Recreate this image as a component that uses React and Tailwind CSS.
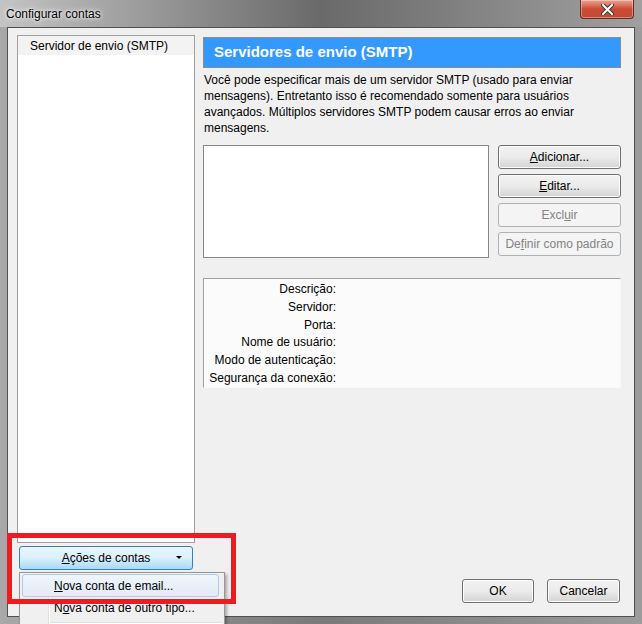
import React from "react";

const font = { fontFamily: '"Liberation Sans", Arial, sans-serif' };

function WinButton({ children, disabled, className = "" }) {
  return (
    <div
      className={`flex items-center justify-center rounded-[3px] border text-[12px] ${
        disabled
          ? "border-[#adb2b5] bg-[#f4f4f4] text-[#838383]"
          : "border-[#707070] bg-gradient-to-b from-[#f2f2f2] via-[#ebebeb] to-[#d4d4d4] text-black shadow-[inset_0_0_0_1px_#fcfcfc]"
      } ${className}`}
    >
      {children}
    </div>
  );
}

export default function App() {
  const fields = [
    "Descrição:",
    "Servidor:",
    "Porta:",
    "Nome de usuário:",
    "Modo de autenticação:",
    "Segurança da conexão:",
  ];

  return (
    <div
      style={font}
      className="relative w-[642px] h-[624px] overflow-hidden bg-gradient-to-r from-[#a8a8a8] via-[#7a7a7a] to-[#9c9c9c]"
    >
      {/* title bar */}
      <div className="relative h-[27px] flex items-center pl-[6px] bg-gradient-to-r from-[#c4c4c4] via-[#6a6a6a] to-[#a0a0a0]">
        <span className="text-[12px] text-black [text-shadow:0_0_6px_#ffffff,0_0_3px_#ffffff]">
          Configurar contas
        </span>
        <div className="absolute right-[8px] top-0 w-[54px] h-[19px] rounded-b-[4px] border border-t-0 border-[#6b2a22] bg-gradient-to-b from-[#e8a494] via-[#cc4a33] to-[#c24a36] flex items-center justify-center shadow-[inset_0_0_0_1px_rgba(255,255,255,0.35)]">
          <svg width="13" height="11" viewBox="0 0 13 11">
            <path
              d="M2 1 L11 10 M11 1 L2 10"
              stroke="#3a3a3a"
              strokeWidth="4"
              strokeLinecap="round"
            />
            <path
              d="M2 1 L11 10 M11 1 L2 10"
              stroke="#ffffff"
              strokeWidth="2"
              strokeLinecap="round"
            />
          </svg>
        </div>
      </div>

      {/* window content */}
      <div className="ml-[7px] w-[628px] h-[590px] border border-[#505050] bg-[#f0f0f0] flex flex-row pl-[9px] pt-[7px] pb-[13px]">
        {/* left column */}
        <div className="w-[178px] flex flex-col">
          <div className="h-[508px] border border-[#a0a0a0] bg-white">
            <div className="h-[19px] bg-[#f3f3f3] pl-[12px] flex items-center text-[12px] text-black">
              Servidor de envio (SMTP)
            </div>
          </div>
          <div className="mt-[3px] ml-[2px] w-[174px] h-[24px] rounded-[3px] border border-[#3c7fb1] bg-gradient-to-b from-[#eaf6fd] via-[#d9f0fc] to-[#a7d9f5] flex items-center text-[12px] text-black relative">
            <span className="flex-1 text-center">
              <span className="underline">A</span>ções de contas
            </span>
            <span className="absolute right-[10px] top-[9px] w-0 h-0 border-l-[3px] border-r-[3px] border-t-[3px] border-l-transparent border-r-transparent border-t-black" />
          </div>
        </div>

        {/* right column */}
        <div className="ml-[8px] w-[418px] flex flex-col pt-[2px]">
          <div className="h-[31px] border border-[#8c8c8c] bg-[#3399ff] flex items-center pl-[10px] text-[15px] font-bold text-white">
            Servidores de envio (SMTP)
          </div>
          <p className="mt-[4px] pl-[1px] text-[12px] leading-[16px] text-black">
            Você pode especificar mais de um servidor SMTP (usado para enviar
            <br />
            mensagens). Entretanto isso é recomendado somente para usuários
            <br />
            avançados. Múltiplos servidores SMTP podem causar erros ao enviar
            <br />
            mensagens.
          </p>
          <div className="mt-[9px] flex flex-row">
            <div className="w-[286px] h-[113px] border border-[#828790] bg-white" />
            <div className="ml-[9px] w-[123px] flex flex-col gap-[5px]">
              <WinButton className="h-[24px]">
                <span>
                  <span className="underline">A</span>dicionar...
                </span>
              </WinButton>
              <WinButton className="h-[24px]">
                <span>
                  <span className="underline">E</span>ditar...
                </span>
              </WinButton>
              <WinButton disabled className="h-[24px]">
                <span>
                  Excl<span className="underline">u</span>ir
                </span>
              </WinButton>
              <WinButton disabled className="h-[24px]">
                <span>
                  De<span className="underline">f</span>inir como padrão
                </span>
              </WinButton>
            </div>
          </div>

          <div className="mt-[20px] h-[110px] border-t border-l border-[#a0a0a0] border-r border-r-[#f8f8f8] border-b border-b-[#f8f8f8] bg-[#fbfbfb] pt-[1px]">
            {fields.map((f) => (
              <div
                key={f}
                className="h-[17.8px] w-[132px] flex items-center justify-end text-[12px] text-black"
              >
                {f}
              </div>
            ))}
          </div>

          <div className="mt-auto flex flex-row justify-end gap-[13px] pr-[1px]">
            <WinButton className="w-[72px] h-[24px]">OK</WinButton>
            <WinButton className="w-[73px] h-[24px]">Cancelar</WinButton>
          </div>
        </div>
      </div>

      {/* dropdown menu */}
      <div className="absolute left-[19px] top-[572px] w-[206px] h-[60px] border border-[#979797] bg-[#f0f0f0] shadow-[2px_2px_3px_rgba(0,0,0,0.3)] text-[12px] text-black">
        <div className="absolute left-[28px] top-0 bottom-0 w-[2px] border-l border-[#e2e3e3] bg-white" />
        <div className="relative mt-[1px] ml-[2px] w-[197px] h-[23px] rounded-[3px] border border-[#aeccea] bg-gradient-to-b from-[#f0f5fb] to-[#e3ebf5] flex items-center pl-[31px]">
          <span>
            <span className="underline">N</span>ova conta de email...
          </span>
        </div>
        <div className="relative h-[22px] flex items-center pl-[34px]">
          <span>
            N<span className="underline">o</span>va conta de outro tipo...
          </span>
        </div>
        <div className="relative ml-[30px] mt-[3px] mr-[2px] h-[2px] border-t border-[#e0e0e0] bg-white" />
      </div>

      {/* red annotation */}
      <div className="absolute left-[7px] top-[533px] w-[229px] h-[71px] border-[5px] border-[#ed1c24]" />
    </div>
  );
}
